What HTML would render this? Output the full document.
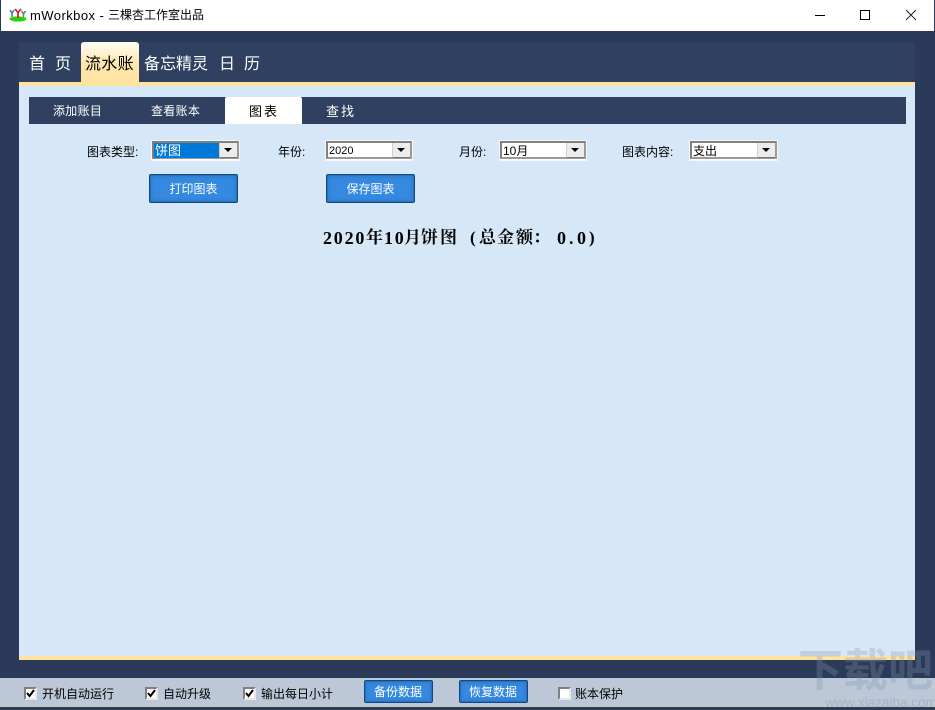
<!DOCTYPE html>
<html lang="zh">
<head>
<meta charset="utf-8">
<style>
html,body{margin:0;padding:0}
body{width:935px;height:708px;position:relative;overflow:hidden;background:#2b3a58;font-family:"Liberation Sans","Noto Sans CJK SC",sans-serif;font-size:12px;color:#000}
.a{position:absolute;white-space:nowrap}
.t{line-height:16px}
.sel{position:absolute;top:140px;height:21px;box-sizing:border-box;background:#fff;border:1px solid #f4f7fa}
.sel .in{position:absolute;left:0;top:0;right:0;bottom:1px;border:2px solid #808080;border-right-color:#999;border-bottom-color:#999;background:#fff;box-sizing:border-box}
.sel .v{position:absolute;left:0;top:0;height:15px;line-height:16px;font-size:12px;padding-left:1px}
.sel .b{position:absolute;right:0;top:0;width:18px;height:15px;background:#ececec;border-left:1px solid #d0d0d0;border-bottom:1px solid #777;box-sizing:border-box}
.sel .b:after{content:"";position:absolute;left:4px;top:5px;border-left:4px solid transparent;border-right:4px solid transparent;border-top:4px solid #000}
.btn{position:absolute;box-sizing:border-box;background:#3589e0;border:1px solid #0f4a86;box-shadow:inset 0 0 0 1px #2a70bb,inset 0 0 3px 2px #2f7ccd;color:#fff;text-align:center;border-radius:2px}
.cb{position:absolute;top:687px;width:13px;height:13px;box-sizing:border-box;background:#fff;border:2px solid #808080;border-right-color:#e8e8e8;border-bottom-color:#e8e8e8}
.tab{position:absolute;top:54px;font-size:16px;line-height:22px;color:#fff;white-space:nowrap}
.sub{position:absolute;top:103px;font-size:12px;letter-spacing:.3px;line-height:17px;color:#fff;white-space:nowrap}
.h{position:absolute;top:228px;font-family:"Liberation Serif","Noto Serif CJK SC",serif;font-weight:bold;font-size:17px;line-height:20px;color:#000;white-space:nowrap}
.d{font-size:18px;letter-spacing:1.8px}
.wm{position:absolute;color:#8496ae;opacity:.3;white-space:nowrap}
</style>
</head>
<body>
<!-- title bar -->
<div class="a" style="left:1px;top:0;width:933px;height:31px;background:#fff"></div>
<svg class="a" style="left:8px;top:8px" width="20" height="14" viewBox="0 0 20 14">
<ellipse cx="10" cy="11" rx="8.5" ry="2.6" fill="#2fd00f"/>
<path d="M2 2l2 3 2-3M4 5v4" stroke="#3a78b8" stroke-width="1.5" fill="none"/>
<path d="M7 1l3 3.5L13 1M10 4.5V10" stroke="#d02020" stroke-width="1.7" fill="none"/>
<path d="M13.5 3l2 3 2-3M15.5 6v3" stroke="#4a8a60" stroke-width="1.5" fill="none"/>
</svg>
<div class="a" style="left:30px;top:7px;font-size:13px;letter-spacing:.45px;line-height:17px">mWorkbox -</div>
<div class="a" style="left:108px;top:7px;font-size:12px;line-height:17px">三棵杏工作室出品</div>
<svg class="a" style="left:810px;top:8px" width="115" height="15" viewBox="0 0 115 15">
<path d="M5 7.5h10" stroke="#000" stroke-width="1"/>
<rect x="50.5" y="2.5" width="9" height="9" fill="none" stroke="#000" stroke-width="1"/>
<path d="M96 2l10 10M106 2l-10 10" stroke="#222" stroke-width="1"/>
</svg>

<!-- tab area -->
<div class="a" style="left:19px;top:42px;width:896px;height:40px;background:#2f4060"></div>
<div class="a" style="left:81px;top:42px;width:58px;height:40px;background:linear-gradient(#fffdf6,#ffe6ab 55%,#ffe3a0);border-radius:3px 3px 0 0"></div>
<div class="tab" style="left:29px;letter-spacing:10px">首页</div>
<div class="tab" style="left:85px;color:#000;letter-spacing:.3px">流水账</div>
<div class="tab" style="left:144px">备忘精灵</div>
<div class="tab" style="left:219px;letter-spacing:9px">日历</div>

<!-- content panel -->
<div class="a" style="left:19px;top:82px;width:896px;height:4px;background:#ffe3a0"></div>
<div class="a" style="left:19px;top:86px;width:896px;height:570px;background:#d6e8f7"></div>
<div class="a" style="left:19px;top:656px;width:896px;height:4px;background:#ffe3a0"></div>

<!-- sub tabs -->
<div class="a" style="left:29px;top:97px;width:877px;height:27px;background:#2f4060"></div>
<div class="a" style="left:225px;top:97px;width:77px;height:27px;background:#fff;border-radius:2px 2px 0 0"></div>
<div class="sub" style="left:53px">添加账目</div>
<div class="sub" style="left:151px">查看账本</div>
<div class="sub" style="left:249px;color:#000;letter-spacing:2px;font-size:13px">图表</div>
<div class="sub" style="left:326px;letter-spacing:2px;font-size:13px">查找</div>

<!-- form row -->
<div class="a t" style="left:87px;top:144px">图表类型:</div>
<div class="sel" style="left:151px;width:89px"><div class="in"><div class="v" style="width:66px;background:#0078d7;color:#fff;font-size:13px">饼图</div><div class="b"></div></div></div>
<div class="a t" style="left:278px;top:144px">年份:</div>
<div class="sel" style="left:325px;width:88px"><div class="in"><div class="v" style="font-size:11px">2020</div><div class="b"></div></div></div>
<div class="a t" style="left:459px;top:144px">月份:</div>
<div class="sel" style="left:499px;width:88px"><div class="in"><div class="v">10月</div><div class="b"></div></div></div>
<div class="a t" style="left:622px;top:144px">图表内容:</div>
<div class="sel" style="left:689px;width:89px"><div class="in"><div class="v">支出</div><div class="b"></div></div></div>

<!-- buttons -->
<div class="btn" style="left:149px;top:174px;width:89px;height:29px;line-height:29px;font-size:12px">打印图表</div>
<div class="btn" style="left:326px;top:174px;width:89px;height:29px;line-height:29px;font-size:12px">保存图表</div>

<!-- heading -->
<div class="h d" style="left:323px">2020</div>
<div class="h" style="left:366px">年</div>
<div class="h d" style="left:384px">10</div>
<div class="h" style="left:404px">月</div>
<div class="h" style="left:421px">饼</div>
<div class="h" style="left:440px">图</div>
<div class="h" style="left:470px">(</div>
<div class="h" style="left:479px">总</div>
<div class="h" style="left:497px">金</div>
<div class="h" style="left:516px">额</div>
<div class="h" style="left:533px">：</div>
<div class="h d" style="left:557px;letter-spacing:0">0</div>
<div class="h d" style="left:569px;letter-spacing:0">.</div>
<div class="h d" style="left:577px;letter-spacing:0">0</div>
<div class="h" style="left:589px">)</div>

<!-- bottom bar -->
<div class="a" style="left:0;top:678px;width:935px;height:29px;background:#bcc8d8"></div>
<div class="a" style="left:0;top:707px;width:935px;height:1px;background:#3a3f48"></div>

<div class="cb" style="left:24px"><svg width="9" height="9" style="display:block"><path d="M1 4l2.5 3L8 1" stroke="#000" stroke-width="2" fill="none"/></svg></div>
<div class="a t" style="left:42px;top:686px">开机自动运行</div>
<div class="cb" style="left:145px"><svg width="9" height="9" style="display:block"><path d="M1 4l2.5 3L8 1" stroke="#000" stroke-width="2" fill="none"/></svg></div>
<div class="a t" style="left:163px;top:686px">自动升级</div>
<div class="cb" style="left:243px"><svg width="9" height="9" style="display:block"><path d="M1 4l2.5 3L8 1" stroke="#000" stroke-width="2" fill="none"/></svg></div>
<div class="a t" style="left:261px;top:686px">输出每日小计</div>
<div class="btn" style="left:364px;top:680px;width:69px;height:23px;line-height:23px;text-indent:-1px">备份数据</div>
<div class="btn" style="left:459px;top:680px;width:69px;height:23px;line-height:23px;text-indent:-1px">恢复数据</div>
<div class="cb" style="left:558px"></div>
<div class="a t" style="left:575px;top:686px">账本保护</div>

<!-- watermark -->
<div class="wm" style="left:798px;top:646px;font-size:45px;line-height:50px;font-weight:bold;width:137px;overflow:hidden">下载吧</div>
<div class="wm" style="left:825px;top:695px;font-size:14px;line-height:14px;letter-spacing:-.2px;opacity:.4">www.xiazaiba.com</div>
</body>
</html>
